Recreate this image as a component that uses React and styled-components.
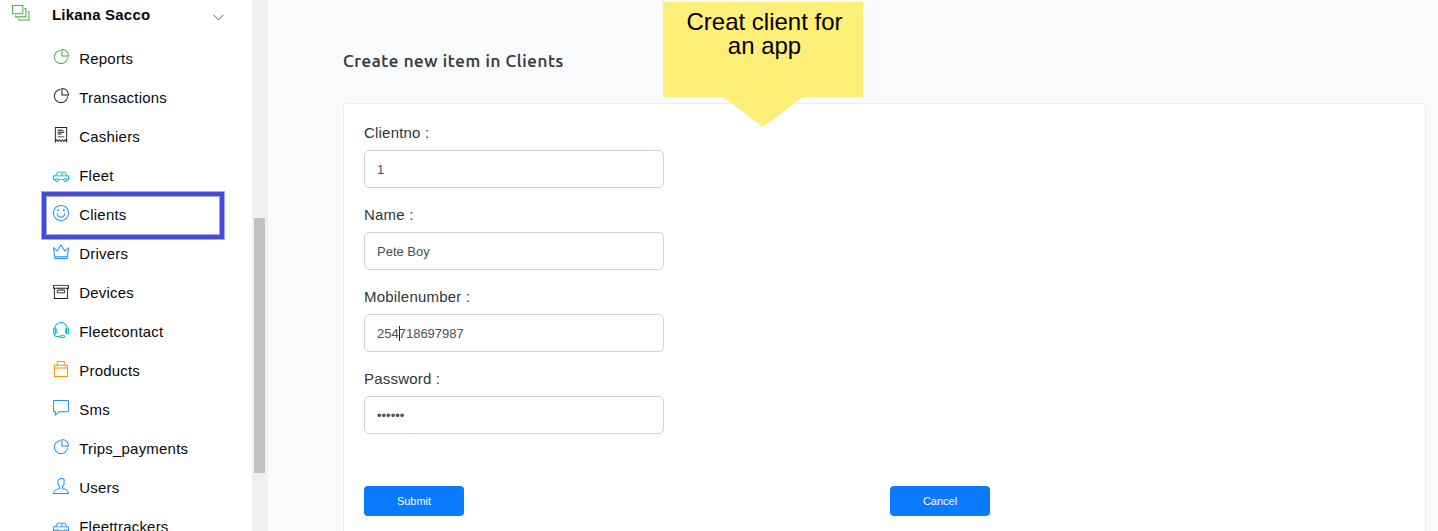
import React from "react";
import styled, { createGlobalStyle } from "styled-components";
import {
  TfiPieChart,
  TfiReceipt,
  TfiCar,
  TfiFaceSmile,
  TfiCrown,
  TfiArchive,
  TfiHeadphoneAlt,
  TfiBag,
  TfiComment,
  TfiUser,
  TfiLayersAlt,
  TfiAngleDown,
} from "react-icons/tfi";

const GlobalStyle = createGlobalStyle`
  * { box-sizing: border-box; }
  body {
    margin: 0;
    overflow: hidden;
    font-family: "Liberation Sans", Arial, sans-serif;
    letter-spacing: 0.2px;
  }
`;

const Page = styled.div`
  display: flex;
  height: 531px;
  overflow: hidden;
  background: #f9fafc;
`;

const Sidebar = styled.nav`
  flex: none;
  width: 252px;
  background: #fff;
  color: #0a0a0a;
  font-size: 15px;
`;

const GroupHeader = styled.div`
  display: flex;
  align-items: center;
  height: 39px;
  padding: 0 28px 10px 12px;
`;

const GroupIcon = styled.span`
  display: flex;
  width: 40px;
  margin-top: -4px;
  color: #4caf50;
  font-size: 17.5px;
`;

const GroupName = styled.span`
  flex: 1;
  font-weight: 700;
`;

const Chevron = styled(TfiAngleDown)`
  width: 11px;
  height: 11px;
  margin-top: 5px;
  color: #444;
`;

const NavItem = styled.a`
  position: relative;
  display: flex;
  align-items: center;
  height: 39px;
  padding-left: 53px;
`;

const NavIcon = styled.span`
  display: flex;
  width: 26.25px;
  margin-top: -4px;
  color: ${(p) => p.$color};
  font-size: 16px;

  svg {
    stroke: currentColor;
    stroke-width: 0.08px;
  }
`;

const Highlight = styled.span`
  position: absolute;
  inset: -4px 27px -6px 41px;
  border: 1px solid #a3a6ea;
  box-shadow: inset 0 0 0 4px #444bd6, inset 0 0 0 5px #a3a6ea;
`;

const ScrollTrack = styled.div`
  flex: none;
  width: 16px;
  padding: 218px 3px 0 2px;
  background: #f0f0f0;
`;

const ScrollThumb = styled.div`
  height: 255px;
  background: #c1c1c1;
`;

const Main = styled.main`
  flex: 1;
  padding: 50px 12px 0 75px;
`;

const Title = styled.h1`
  height: 53px;
  margin: 0;
  color: #313539;
  font: 500 17px/22px Ubuntu, "Noto Sans", sans-serif;
  letter-spacing: 0.65px;
  -webkit-text-stroke: 0.2px #313539;
`;

const Card = styled.form`
  height: 460px;
  padding: 19px 20px;
  border: 1px solid #ebedf0;
  border-radius: 3px;
  background: #fff;
`;

const Field = styled.label`
  display: block;
  height: 82px;
  color: #313539;
  font-size: 15px;
  line-height: 20px;
  letter-spacing: 0.2px;
`;

const InputWrap = styled.span`
  position: relative;
  display: block;
  width: 300px;
  margin-top: 7px;
`;

const Input = styled.input`
  display: block;
  width: 300px;
  height: 38px;
  padding: 6px 12px;
  border: 1px solid #ced4da;
  border-radius: 5px;
  background: #fff;
  color: #495057;
  font: 13px "Liberation Sans", Arial, sans-serif;
  outline: none;
`;

const Caret = styled.span`
  position: absolute;
  top: 12px;
  left: 35px;
  width: 1px;
  height: 15px;
  background: #222;
`;

const Actions = styled.div`
  display: grid;
  grid-template-columns: 526px auto;
  margin-top: 35px;
`;

const Button = styled.button`
  width: 100px;
  height: 30px;
  padding: 0;
  border: 0;
  border-radius: 4px;
  background: #0a7aff;
  color: #fff;
  font: 11px "Liberation Sans", Arial, sans-serif;
`;

const Callout = styled.aside`
  position: absolute;
  top: 2px;
  left: 663px;
  width: 200px;
  height: 125px;
  padding: 8px 16px 0 19px;
  background: #ffee78;
  clip-path: polygon(0 0, 100% 0, 100% 95px, 140px 95px, 50% 100%, 60px 95px, 0 95px);
  color: #000;
  font-size: 24px;
  line-height: 24px;
  letter-spacing: 0;
  text-align: center;
`;

const items = [
  { label: "Reports", icon: TfiPieChart, color: "#4caf50" },
  { label: "Transactions", icon: TfiPieChart, color: "#212529" },
  { label: "Cashiers", icon: TfiReceipt, color: "#212529" },
  { label: "Fleet", icon: TfiCar, color: "#00bcd4" },
  { label: "Clients", icon: TfiFaceSmile, color: "#2196f3", active: true },
  { label: "Drivers", icon: TfiCrown, color: "#2196f3" },
  { label: "Devices", icon: TfiArchive, color: "#212529" },
  { label: "Fleetcontact", icon: TfiHeadphoneAlt, color: "#00bcd4" },
  { label: "Products", icon: TfiBag, color: "#ff9800" },
  { label: "Sms", icon: TfiComment, color: "#2196f3" },
  { label: "Trips_payments", icon: TfiPieChart, color: "#2196f3" },
  { label: "Users", icon: TfiUser, color: "#2196f3" },
  { label: "Fleettrackers", icon: TfiCar, color: "#2196f3" },
];

const fields = [
  { label: "Clientno :", value: "1" },
  { label: "Name :", value: "Pete Boy" },
  { label: "Mobilenumber :", value: "254718697987", caret: true },
  { label: "Password :", value: "secret", type: "password" },
];

export default function App() {
  return (
    <>
      <GlobalStyle />
      <Page>
        <Sidebar>
          <GroupHeader>
            <GroupIcon><TfiLayersAlt /></GroupIcon>
            <GroupName>Likana Sacco</GroupName>
            <Chevron />
          </GroupHeader>
          {items.map(({ label, icon: Icon, color, active }) => (
            <NavItem key={label}>
              <NavIcon $color={color}><Icon /></NavIcon>
              {label}
              {active && <Highlight />}
            </NavItem>
          ))}
        </Sidebar>
        <ScrollTrack><ScrollThumb /></ScrollTrack>
        <Main>
          <Title>Create new item in Clients</Title>
          <Card>
            {fields.map(({ label, value, type = "text", caret }) => (
              <Field key={label}>
                {label}
                <InputWrap>
                  <Input type={type} defaultValue={value} />
                  {caret && <Caret />}
                </InputWrap>
              </Field>
            ))}
            <Actions>
              <Button type="button">Submit</Button>
              <Button type="button">Cancel</Button>
            </Actions>
          </Card>
        </Main>
      </Page>
      <Callout>Creat client for an app</Callout>
    </>
  );
}
